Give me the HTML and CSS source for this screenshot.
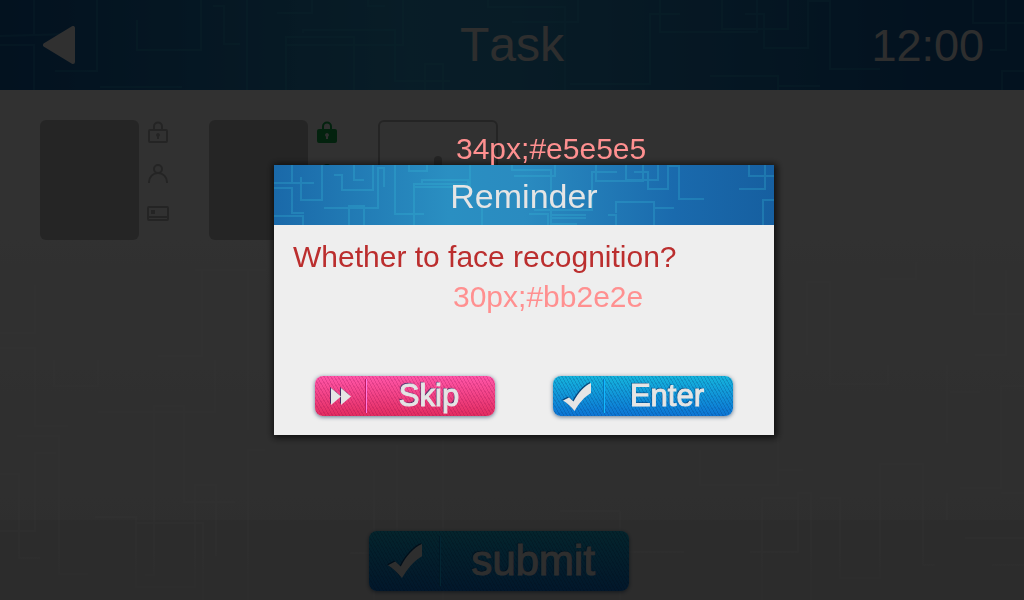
FILE: index.html
```html
<!DOCTYPE html>
<html lang="en">
<head>
<meta charset="utf-8">
<meta name="viewport" content="width=device-width, initial-scale=1">
<title>Task</title>
<link rel="stylesheet" href="styles.css">
</head>
<body>
<svg class="defs" width="0" height="0" aria-hidden="true">
  <symbol id="lock" viewBox="0 0 22 24">
    <path d="M7 10V6.500a4 4 0 0 1 8 0V10" fill="none" stroke="currentColor" stroke-width="2"/>
    <rect x="2" y="10" width="18" height="12" rx="1" stroke="currentColor" stroke-width="2"/>
    <path class="keyhole" d="M11 13a2 2 0 0 1 1 3.700V19h-2v-2.300A2 2 0 0 1 11 13z"/>
  </symbol>
  <symbol id="person" viewBox="0 0 22 24">
    <g fill="none" stroke="currentColor" stroke-width="2"><circle cx="11" cy="9" r="4"/><path d="M2 23v-1a9 9 0 0 1 18 0v1"/></g>
  </symbol>
  <symbol id="card" viewBox="0 0 22 24">
    <rect x="1" y="7" width="20" height="13" rx="1" fill="none" stroke="currentColor" stroke-width="2"/>
    <path d="M4 10h4v4H4zM1 16h20v2H1z" fill="currentColor"/>
  </symbol>
  <symbol id="check" viewBox="0 0 28 28">
    <path d="M0 17.500L6 14.500L10.500 18.500C15 10 21 3 28 0V10C21 14 15.500 21 11.500 28C8 23.500 4 20 0 17.500z"/>
  </symbol>
</svg>

<div class="page">
  <svg class="traces page-traces" viewBox="0 0 1024 600" preserveAspectRatio="none" aria-hidden="true">
    <path d="M35 285V333H0M0 348H35V426H68M54 360V386H98V360M195 270H266M202 270V356H158M248 270V430M98 412H215V360M145 575H154V406H184V502H235M17 436H59V574H88M56 453H35V531H0M0 474H19V558H40M95 517H136V587H195V485H216V556M136 523H203V600M248 600V450H265M374 470V600M397 445V532M443 440V600M560 511H620M620 511V600M350 553H374M627 552H684"/>
    <path d="M700 450V485H778V435M778 470H803M762 600V498M750 552H798V493H811V600M762 498H798M820 498H840V578H880V464H923V565H935M960 488H1001V386H1024M1001 493H1024M965 538H1024M992 565H1024M947 365V443M947 493V520M807 355V282H830V384H888V365M880 279H916V262M974 245V314H1024M1006 270V355H975M950 392H980"/>
  </svg>

  <header class="topbar">
    <svg class="traces" viewBox="0 0 1024 90" preserveAspectRatio="none" aria-hidden="true">
      <path d="M0 36L70 34M34 0V34M0 45H34V90M97 0V71H55M137 20V50H201V0M213 6H224V44H240M247 0V90M277 13H312V0M286 90V37H354V90M303 33V30H395V81H450M286 45H403V0M425 90V64H443V90M488 0V7H565V90M100 87H182M368 0V6H385"/>
      <path d="M578 0V22H512M570 84H650V14H680M660 0V32H757V0M722 0V29H788V0M745 14H764V48H808V1H830V69H880M710 76H778V90M778 86H820M973 0V23H1024M1006 0V50H990M1002 90V71H1024"/>
    </svg>
    <button class="back" type="button" aria-label="Back">
      <svg viewBox="0 0 32 38"><path d="M30 2V36L2 19z" fill="#eee" stroke="#eee" stroke-width="4" stroke-linejoin="round"/></svg>
    </button>
    <h1 class="title">Task</h1>
    <time class="clock">12:00</time>
  </header>

  <main class="people">
    <section class="person">
      <div class="photo"></div>
      <div class="status">
        <svg><use href="#lock"/></svg>
        <svg><use href="#person"/></svg>
        <svg><use href="#card"/></svg>
      </div>
    </section>
    <section class="person">
      <div class="photo"></div>
      <div class="status verified">
        <svg class="locked"><use href="#lock"/></svg>
        <svg><use href="#person"/></svg>
        <svg><use href="#card"/></svg>
      </div>
    </section>
    <button class="add" type="button" aria-label="Add">
      <svg viewBox="0 0 48 48"><path d="M24 4V44M4 24H44" stroke="#b2b2b2" stroke-width="8" stroke-linecap="round"/></svg>
    </button>
  </main>

  <footer class="bottombar">
    <button class="btn blue large" type="button">
      <span class="glyph"><svg><use href="#check"/></svg></span>
      <span class="label">submit</span>
    </button>
  </footer>
</div>

<div class="overlay">
  <div class="dialog" role="dialog" aria-modal="true" aria-labelledby="dialog-title">
    <p class="note title-note">34px;#e5e5e5</p>
    <div class="dialog-head">
      <svg class="traces" viewBox="0 0 500 60" preserveAspectRatio="none" aria-hidden="true">
        <path d="M18 0V18M0 18H40M0 23H18V48H30M0 51H29V60M48 0V35H27V12M99 0V25H68V10H60M80 0V15H90M50 43H104V3H110V22M121 0V49H150M75 60V41H90V60M140 60V19H195M148 18V15H194V22H140M196 0V22M135 0V6H153V0M208 60V40"/>
        <path d="M238 0V5H277V60M281 0V11H240M343 7H318V45H260M322 0V16H369V0M352 0V15H384V0M360 7H374V24H394V1H405V34H430M342 48V37H380V60M380 43H400M475 0V11H500M491 0V24H465M489 60V35H500M255 49H274V60M277 50H312M277 53H312M277 59H303M334 50H342V60"/>
      </svg>
      <h2 class="dialog-title" id="dialog-title">Reminder</h2>
    </div>
    <div class="dialog-body">
      <p class="question">Whether to face recognition?</p>
      <p class="note question-note">30px;#bb2e2e</p>
      <div class="actions">
        <button class="btn pink" type="button">
          <span class="glyph"><svg viewBox="0 0 28 28"><path d="M4 6L14 14.500L4 23zM14 6L24 14.500L14 23z"/></svg></span>
          <span class="label">Skip</span>
        </button>
        <button class="btn blue" type="button">
          <span class="glyph"><svg><use href="#check"/></svg></span>
          <span class="label">Enter</span>
        </button>
      </div>
    </div>
  </div>
</div>
</body>
</html>
```
FILE: styles.css
```css
* { box-sizing: border-box; }

body {
  margin: 0;
  font-family: "Liberation Sans", Arial, sans-serif;
  font-kerning: none;
  color: #e5e5e5;
}

h1, h2, p { margin: 0; font-weight: 400; }

button {
  padding: 0;
  border: 0;
  background: none;
  font: inherit;
  font-kerning: none;
  color: inherit;
  cursor: pointer;
}

svg { display: block; }

.defs { position: absolute; }

.page {
  position: relative;
  display: flex;
  flex-direction: column;
  min-height: 100vh;
  background: linear-gradient(#f2f2f2 40%, #e4e4e4);
}

.traces {
  position: absolute;
  inset: 0;
  width: 100%;
  height: 100%;
  fill: none;
  stroke: #38c0dc;
  stroke-width: 2;
  opacity: 0.25;
}

.page-traces { stroke: #fff; opacity: 0.3; }

.topbar {
  position: relative;
  display: grid;
  grid-template-columns: 1fr auto 1fr;
  align-items: center;
  height: 90px;
  padding: 0 40px 2px;
  background: linear-gradient(90deg, #10599c, #2a8fc1 40%, #2a8bbf 50%, #10599c 92%);
}

.back { position: relative; justify-self: start; padding: 0 3px; }
.back svg { width: 32px; height: 38px; }

.title { position: relative; font-size: 48px; line-height: 88px; }

.clock {
  position: relative;
  justify-self: end;
  font-size: 45px;
  line-height: 88px;
  padding-top: 2px;
}

.people {
  position: relative;
  display: flex;
  flex-wrap: wrap;
  gap: 40px;
  padding: 30px 40px;
}

.person { display: flex; gap: 8px; }

.photo {
  width: 99px;
  height: 120px;
  border-radius: 6px;
  background: #b8b8b8;
}

.status {
  display: flex;
  flex-direction: column;
  gap: 16px;
  color: #b2b2b2;
}

.status svg { width: 22px; height: 24px; fill: none; }

.keyhole { fill: var(--keyhole, currentColor); }

.verified { color: #10a845; }
.verified .locked { fill: currentColor; --keyhole: #eee; }

.add {
  display: grid;
  place-items: center;
  width: 120px;
  height: 120px;
  border: 2px solid #b2b2b2;
  border-radius: 6px;
}

.add svg { width: 48px; height: 48px; }

.bottombar {
  position: relative;
  display: flex;
  justify-content: center;
  margin-top: auto;
  padding: 11px 26px 9px 0;
  background: rgba(0, 0, 0, 0.04);
}

.btn {
  display: flex;
  align-items: center;
  width: 180px;
  height: 40px;
  border-radius: 8px;
  font-size: 31px;
  -webkit-text-stroke: 1px #e5e5e5;
  text-shadow: -1px -1px 1px rgba(0, 40, 90, 0.8);
  box-shadow: 0 1px 4px rgba(0, 40, 80, 0.6);
}

.blue {
  background:
    repeating-linear-gradient(60deg, rgba(0, 50, 110, 0.22) 0 1px, transparent 1px 3px),
    linear-gradient(#15b4dc, #0c74d4);
}

.pink {
  background:
    repeating-linear-gradient(60deg, rgba(130, 0, 70, 0.2) 0 1px, transparent 1px 3px),
    linear-gradient(#ff56a8, #e22d60);
}

.glyph {
  display: grid;
  place-items: center;
  width: 52px;
  height: 34px;
  border-right: 1px solid #12b8ff;
  box-shadow: inset -1px 0 #0879bb;
}

.pink .glyph { border-color: #ff7ae0; box-shadow: inset -1px 0 #c01d62; }

.glyph svg {
  width: 28px;
  height: 28px;
  fill: #e5e5e5;
  filter: drop-shadow(-1px -1px 0 rgba(0, 40, 90, 0.7));
}

.blue .glyph { padding: 2px 4px 0 0; }

.label { flex: 1; padding-right: 4px; text-align: center; line-height: 40px; }

.large { width: 260px; height: 60px; font-size: 42px; }
.large .glyph { width: 72px; height: 50px; padding: 0; }
.large .glyph svg { width: 34px; height: 34px; }

.overlay {
  position: fixed;
  inset: 0;
  display: flex;
  align-items: center;
  justify-content: center;
  padding-left: 24px;
  background: rgba(0, 0, 0, 0.8);
}

.dialog {
  position: relative;
  width: 500px;
  max-width: 100%;
  background: #eee;
  box-shadow: 1px 1px 7px 2px rgba(0, 0, 0, 0.7);
}

.dialog-head {
  position: relative;
  background: linear-gradient(90deg, #1a69a9, #2a8fc2 35%, #2a8bc0 50%, #1a6aad 80%, #165fa0);
}

.dialog-title {
  position: relative;
  font-size: 34px;
  line-height: 62px;
  height: 60px;
  text-align: center;
}

.dialog-body { padding: 12px 19px 19px; }

.question { color: #bb2e2e; font-size: 30px; line-height: 40px; }

.note { color: #ff9090; font-size: 30px; line-height: 40px; }

.title-note { position: absolute; left: 182px; top: -36px; z-index: 1; }

.question-note { padding-left: 160px; }

.actions {
  display: flex;
  justify-content: space-between;
  margin-top: 59px;
  padding: 0 22px;
}
```
